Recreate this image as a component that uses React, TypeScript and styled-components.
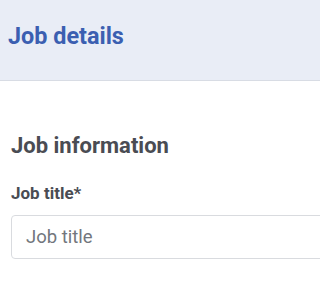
import React from 'react';
import styled, { createGlobalStyle } from 'styled-components';

const GlobalStyle = createGlobalStyle`
  html, body {
    margin: 0;
    overflow: hidden;
    background: #ffffff;
    font-family: Roboto, "Liberation Sans", sans-serif;
  }
`;

const Header = styled.header`
  box-sizing: border-box;
  height: 81px;
  background: #e9edf6;
  border-bottom: 1px solid #d8dce4;
  padding: 22px 8px 0;
`;

const Title = styled.h1`
  margin: 0;
  font-size: 23.4px;
  font-weight: 700;
  color: #3b5fb1;
`;

const Body = styled.main`
  padding: 52px 0 0 11px;
`;

const SectionTitle = styled.h2`
  margin: 0 0 25px;
  font-size: 22px;
  font-weight: 700;
  color: #4a4c53;
`;

const Label = styled.label`
  display: block;
  margin-bottom: 12px;
  font-size: 17px;
  font-weight: 700;
  color: #4a4c53;
`;

/* the field runs past the right edge of the window */
const FieldWrap = styled.div`
  overflow: hidden;
`;

const Input = styled.input`
  display: block;
  box-sizing: border-box;
  width: calc(100% + 40px);
  height: 44px;
  padding: 0 14px;
  border: 1px solid #d9dbdf;
  border-radius: 4px;
  font-family: inherit;
  font-size: 18.5px;
  color: #333;
  &::placeholder {
    color: #72767d;
  }
`;

export default function App() {
  return (
    <>
      <GlobalStyle />
      <Header>
        <Title>Job details</Title>
      </Header>
      <Body>
        <SectionTitle>Job information</SectionTitle>
        <Label htmlFor="title">Job title*</Label>
        <FieldWrap>
          <Input id="title" placeholder="Job title" />
        </FieldWrap>
      </Body>
    </>
  );
}
